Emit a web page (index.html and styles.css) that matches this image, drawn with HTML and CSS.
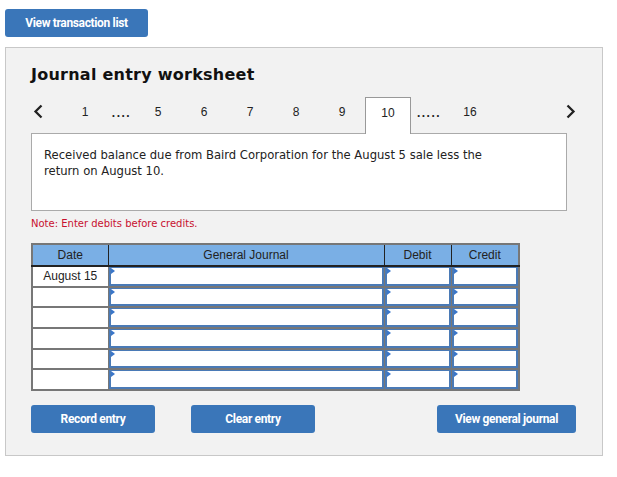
FILE: index.html
```html
<!DOCTYPE html>
<html>
<head>
<meta charset="utf-8">
<link rel="stylesheet" href="styles.css">
</head>
<body>
<div class="page">
  <button class="btn btn-top">View transaction list</button>
  <div class="panel">
    <h1 class="title">Journal entry worksheet</h1>
    <div class="tabs">
      <span class="nav prev"><svg width="10" height="15" viewBox="0 0 10 15"><path d="M8.5 1.5 L2.5 7.5 L8.5 13.5" fill="none" stroke="#222" stroke-width="2.3"/></svg></span>
      <span class="tab">1</span>
      <span class="dots">....</span>
      <span class="tab">5</span>
      <span class="tab">6</span>
      <span class="tab">7</span>
      <span class="tab">8</span>
      <span class="tab">9</span>
      <span class="tab active">10</span>
      <span class="dots dots2">.....</span>
      <span class="tab">16</span>
      <span class="spacer"></span>
      <span class="nav next"><svg width="10" height="15" viewBox="0 0 10 15"><path d="M1.5 1.5 L7.5 7.5 L1.5 13.5" fill="none" stroke="#222" stroke-width="2.3"/></svg></span>
    </div>
    <div class="desc">Received balance due from Baird Corporation for the August 5 sale less the return on August 10.</div>
    <p class="note">Note: Enter debits before credits.</p>
    <table class="journal">
      <colgroup>
        <col class="c-date"><col class="c-gj"><col class="c-dr"><col class="c-cr">
      </colgroup>
      <thead>
        <tr><th>Date</th><th>General Journal</th><th>Debit</th><th>Credit</th></tr>
      </thead>
      <tbody>
        <tr><td class="date">August 15</td><td><div class="inp"></div></td><td><div class="inp"></div></td><td><div class="inp"></div></td></tr>
        <tr><td class="date"></td><td><div class="inp"></div></td><td><div class="inp"></div></td><td><div class="inp"></div></td></tr>
        <tr><td class="date"></td><td><div class="inp"></div></td><td><div class="inp"></div></td><td><div class="inp"></div></td></tr>
        <tr><td class="date"></td><td><div class="inp"></div></td><td><div class="inp"></div></td><td><div class="inp"></div></td></tr>
        <tr><td class="date"></td><td><div class="inp"></div></td><td><div class="inp"></div></td><td><div class="inp"></div></td></tr>
        <tr><td class="date"></td><td><div class="inp"></div></td><td><div class="inp"></div></td><td><div class="inp"></div></td></tr>
      </tbody>
    </table>
    <div class="actions">
      <button class="btn btn-rec">Record entry</button>
      <button class="btn btn-clr">Clear entry</button>
      <span class="spacer"></span>
      <button class="btn btn-view">View general journal</button>
    </div>
  </div>
</div>
</body>
</html>
```

FILE: styles.css
```css
html, body { margin: 0; padding: 0; background: #fff; }
.page { padding: 9px 0 0 5px; width: 600px; }
.btn {
  display: block;
  background: #3a76b9;
  color: #fff;
  border: none;
  border-radius: 3px;
  font-family: Roboto, "Liberation Sans", sans-serif;
  font-weight: 700;
  font-size: 12px;
  letter-spacing: -0.35px;
  height: 28px;
  padding: 0;
  cursor: pointer;
}
.btn-top { width: 143px; }
.panel {
  margin-top: 10px;
  width: 596px;
  height: 407px;
  background: #f2f2f2;
  border: 1px solid #c8c8c8;
  padding: 0;
  display: flex;
  flex-direction: column;
  align-items: flex-start;
}
.title {
  margin: 17px 0 0 25px;
  font-family: "DejaVu Sans", Verdana, sans-serif;
  font-weight: 700;
  font-size: 16px;
  letter-spacing: 0.25px;
  color: #111;
  line-height: 20px;
}
.tabs {
  margin: 12px 0 0 25px;
  display: flex;
  align-items: stretch;
  width: 545px;
  height: 36px;
  font-family: "Liberation Sans", Arial, sans-serif;
  font-size: 12px;
  color: #222;
}
.tabs span { display: flex; align-items: center; justify-content: center; box-sizing: border-box; padding-bottom: 7px; }
.nav { width: 31px; }
.prev { justify-content: flex-start !important; padding-left: 2px; }
.next { justify-content: flex-end !important; padding-right: 0; }
.tab { width: 46px; }
.tab.active {
  background: #fff;
  border: 1px solid #999;
  border-bottom: none;
  position: relative;
  z-index: 2;
  margin-bottom: -1px;
  padding-bottom: 6px !important;
}
.dots { width: 27px; font-weight: 700; letter-spacing: 1.5px; padding-bottom: 5px !important; }
.dots2 { width: 36px; }
.spacer { flex: 1; }
.desc {
  margin-left: 25px;
  width: 536px;
  height: 78px;
  box-sizing: border-box;
  background: #fff;
  border: 1px solid #aaa;
  padding: 13px 60px 0 12px;
  font-family: "DejaVu Sans", Verdana, sans-serif;
  font-size: 11.6px;
  line-height: 16px;
  color: #222;
}
.note {
  margin: 7px 0 0 25px;
  font-family: "DejaVu Sans", Verdana, sans-serif;
  font-size: 10px;
  color: #c8102e;
}
.journal {
  margin: 14px 0 0 25px;
  border-collapse: collapse;
  width: 487px;
  table-layout: fixed;
  border: 2px solid #777;
  font-family: "Liberation Sans", Arial, sans-serif;
  font-size: 12px;
}
.c-date { width: 76px; }
.c-gj { width: 276px; }
.c-dr { width: 67px; }
.c-cr { width: 68px; }
.journal th {
  background: #7aafe5;
  color: #222;
  font-weight: 400;
  height: 20px;
  padding: 0;
  border-left: 1px solid #222;
  border-bottom: 2px solid #222;
}
.journal th:first-child { border-left: none; }
.journal td {
  height: 18.67px;
  padding: 0;
  background: #fff;
  border: 1px solid #777;
  border-top-width: 2px;
  vertical-align: top;
}
.journal tbody tr:first-child td { border-top: none; }
.journal td.date { text-align: center; vertical-align: middle; color: #222; }
.inp {
  position: relative;
  height: 18.67px;
  box-sizing: border-box;
  border: 2px solid #4a7ab6;
  border-top-width: 1px;
  background: #fff;
}
.inp::before {
  content: "";
  position: absolute;
  left: 0;
  top: 0;
  border-left: 4px solid #3a76c9;
  border-top: 3px solid transparent;
  border-bottom: 3px solid transparent;
}
.actions {
  margin: 14px 0 0 25px;
  width: 545px;
  display: flex;
}
.btn-rec { width: 124px; }
.btn-clr { width: 124px; margin-left: 36px; }
.btn-view { width: 139px; }
```
